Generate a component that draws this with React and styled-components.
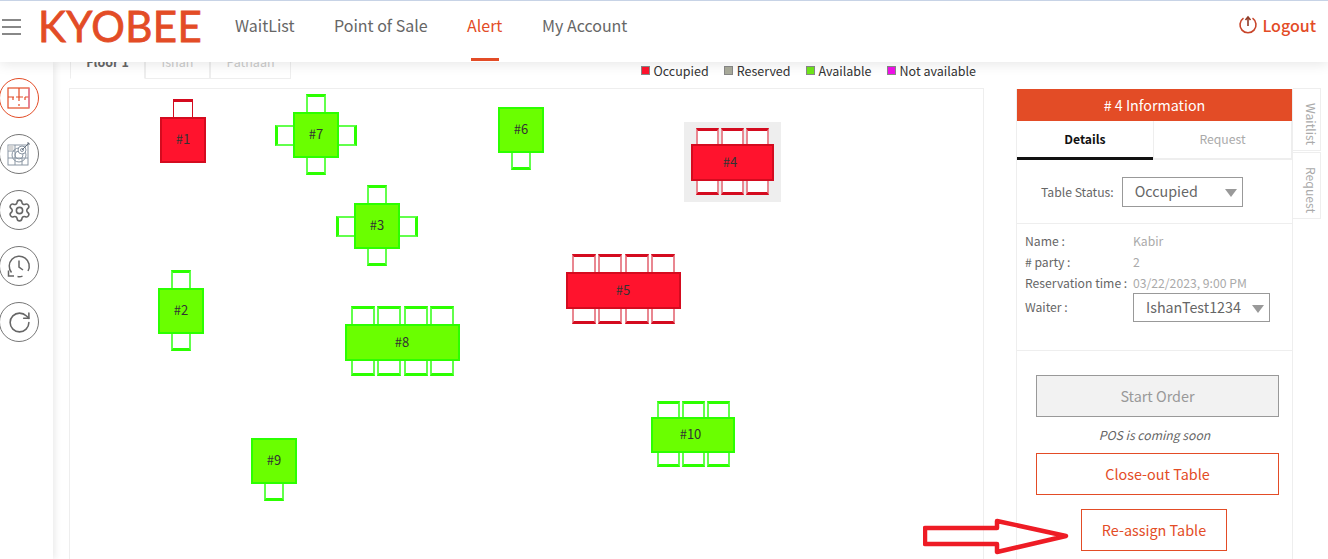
import React from "react";
import styled, { createGlobalStyle } from "styled-components";
import { Settings, RotateCw } from "lucide-react";

const ORANGE = "#e34c26";
const RED = { fill: "#ff132d", edge: "#d40b1f", soft: "#e98791" };
const GREEN = { fill: "#6aff00", edge: "#2cff00", soft: "#62ff4c" };

const tables = [
  { id: 1, x: 90, y: 10, w: 46, h: 46, top: 1, color: RED, sharp: true },
  { id: 7, x: 205, y: 5, w: 46, h: 46, top: 1, bottom: 1, left: 1, right: 1, color: GREEN },
  { id: 3, x: 266, y: 96, w: 46, h: 46, top: 1, bottom: 1, left: 1, right: 1, color: GREEN },
  { id: 6, x: 428, y: 18, w: 46, h: 46, bottom: 1, color: GREEN },
  { id: 2, x: 88, y: 181, w: 46, h: 46, top: 1, bottom: 1, color: GREEN },
  { id: 9, x: 181, y: 349, w: 46, h: 46, bottom: 1, color: GREEN },
  { id: 4, x: 621, y: 39, w: 83, h: 37, top: 3, bottom: 3, color: RED, size: "mid", selected: true },
  { id: 5, x: 496, y: 165, w: 115, h: 37, top: 4, bottom: 4, color: RED, size: "long" },
  { id: 8, x: 275, y: 217, w: 115, h: 37, top: 4, bottom: 4, color: GREEN, size: "long" },
  { id: 10, x: 581, y: 312, w: 84, h: 36, top: 3, bottom: 3, color: GREEN, size: "mid" },
];

const legend = [
  { label: "Occupied", color: "#ff132d" },
  { label: "Reserved", color: "#a9ab9b" },
  { label: "Available", color: "#6fe61a" },
  { label: "Not available", color: "#f010e8" },
];

function FloorIcon() {
  return (
    <svg width="24" height="22" viewBox="0 0 24 22" fill="none" stroke={ORANGE} strokeWidth="1.2">
      <rect x="1" y="1" width="21" height="20" />
      <path d="M12 1v13M12 17v2M1 10h6M9 10h7M18 10h4M6 10v3M18 10v3" />
      <path d="M22 1v20" stroke="#e07aa8" />
    </svg>
  );
}

function TargetIcon() {
  return (
    <svg width="24" height="24" viewBox="0 0 24 24" fill="none" stroke="#8a96a3" strokeWidth="1">
      <rect x="1" y="3" width="20" height="20" />
      <path d="M1 9h7M1 16h20M8 3v20M15 16v7" />
      <rect x="1.5" y="3.5" width="5" height="5" fill="#d5d5d5" stroke="none" />
      <circle cx="12" cy="13" r="7" />
      <circle cx="12" cy="13" r="4" />
      <circle cx="15" cy="8" r="4" fill="#fff" />
      <circle cx="15" cy="8" r="1.5" />
      <path d="M15 8l7-7M20 1h2v2" stroke="#66717d" />
    </svg>
  );
}

function ClockBackIcon() {
  return (
    <svg width="24" height="24" viewBox="0 0 24 24" fill="none" stroke="#666" strokeWidth="1.5">
      <path d="M4.5 18.5A10 10 0 1 1 21 17" />
      <path d="M12 6.5v6.5l4 3" />
      <path d="M1.5 16.5v5.5h5.5" />
      <path d="M10.5 22.5c2 .4 3.5.2 5-.4" />
    </svg>
  );
}

function LogoutIcon() {
  return (
    <svg width="20" height="20" viewBox="0 0 20 20" fill="none" stroke="#c8452a" strokeWidth="1.6">
      <path d="M5.5 3.2a8 8 0 1 0 9 0" />
      <path d="M10 11V2.5" stroke="#8f3a26" />
      <path d="M7.5 5L10 2l2.5 3" stroke="#8f3a26" />
    </svg>
  );
}

function DiningTable({ t }) {
  const seats = (side, n) =>
    Array.from({ length: n || 0 }, (_, i) => (
      <Seat key={i} $side={side} $c={t.color} $sharp={t.sharp} $size={t.size} />
    ));
  return (
    <TableUnit $x={t.x} $y={t.y} $selected={t.selected}>
      <SeatRow $area="top" $size={t.size}>{seats("top", t.top)}</SeatRow>
      <SeatRow $area="left">{seats("left", t.left)}</SeatRow>
      <TableTop $w={t.w} $h={t.h} $c={t.color} $size={t.size}>#{t.id}</TableTop>
      <SeatRow $area="right">{seats("right", t.right)}</SeatRow>
      <SeatRow $area="bottom" $size={t.size}>{seats("bottom", t.bottom)}</SeatRow>
    </TableUnit>
  );
}

export default function App() {
  return (
    <Page>
      <GlobalStyle />
      <Header>
        <Burger>
          <span />
          <span />
          <span />
        </Burger>
        <Logo>KYOBEE</Logo>
        <Nav>
          <NavItem $w={99}>WaitList</NavItem>
          <NavItem $w={133}>Point of Sale</NavItem>
          <NavItem $w={75} $active>Alert</NavItem>
          <NavItem>My Account</NavItem>
        </Nav>
        <Logout>
          <LogoutIcon />
          Logout
        </Logout>
      </Header>

      <Body>
        <Sidebar>
          <RoundIcon $active><FloorIcon /></RoundIcon>
          <RoundIcon><TargetIcon /></RoundIcon>
          <RoundIcon><Settings size={25} strokeWidth={1.5} color="#666" /></RoundIcon>
          <RoundIcon><ClockBackIcon /></RoundIcon>
          <RoundIcon><RotateCw size={25} strokeWidth={1.5} color="#666" /></RoundIcon>
        </Sidebar>

        <Main>
          <FloorBar>
            <FloorTabs>
              <FloorTab $w={75} $active>Floor 1</FloorTab>
              <FloorTab $w={65}>Ishan</FloorTab>
              <FloorTab $w={81}>Pathaan</FloorTab>
            </FloorTabs>
            <Legend>
              {legend.map((item) => (
                <LegendItem key={item.label}>
                  <Swatch $c={item.color} />
                  {item.label}
                </LegendItem>
              ))}
            </Legend>
          </FloorBar>
          <Canvas>
            {tables.map((t) => (
              <DiningTable key={t.id} t={t} />
            ))}
          </Canvas>
        </Main>

        <Panel>
          <PanelTitle># 4 Information</PanelTitle>
          <PanelTabs>
            <PanelTab $active>Details</PanelTab>
            <PanelTab>Request</PanelTab>
          </PanelTabs>
          <StatusRow>
            <StatusLabel>Table Status:</StatusLabel>
            <FakeSelect $w={121} $h={30}>
              Occupied
              <Caret />
            </FakeSelect>
          </StatusRow>
          <InfoBlock>
            <InfoRow $h={21}>
              <InfoLabel>Name :</InfoLabel>
              <InfoValue>Kabir</InfoValue>
            </InfoRow>
            <InfoRow $h={21}>
              <InfoLabel># party :</InfoLabel>
              <InfoValue>2</InfoValue>
            </InfoRow>
            <InfoRow $h={21}>
              <InfoLabel>Reservation time :</InfoLabel>
              <InfoValue>03/22/2023, 9:00 PM</InfoValue>
            </InfoRow>
            <InfoRow $h={29}>
              <InfoLabel $raised>Waiter :</InfoLabel>
              <FakeSelect $w={137} $h={29}>
                IshanTest1234
                <Caret />
              </FakeSelect>
            </InfoRow>
          </InfoBlock>
          <Actions>
            <ActionButton $disabled>Start Order</ActionButton>
            <ComingSoon>POS is coming soon</ComingSoon>
            <ActionButton>Close-out Table</ActionButton>
            <ActionButton $small>Re-assign Table</ActionButton>
          </Actions>
        </Panel>

        <SideTabs>
          <SideTab $h={63}>Waitlist</SideTab>
          <SideTab $h={67}>Request</SideTab>
        </SideTabs>
      </Body>

      <Annotation width="150" height="40" viewBox="0 0 150 40" fill="none">
        <path
          d="M2 10H74V3L143 18L74 34V26H2Z"
          stroke="#ee1c25"
          strokeWidth="4.5"
          strokeLinejoin="round"
        />
      </Annotation>
    </Page>
  );
}

const GlobalStyle = createGlobalStyle`
  html, body {
    margin: 0;
    padding: 0;
    background: #fff;
    overflow: hidden;
  }
  * {
    box-sizing: border-box;
  }
`;

const Page = styled.div`
  position: relative;
  width: 1328px;
  height: 559px;
  overflow: hidden;
  display: flex;
  flex-direction: column;
  font-family: "Noto Sans CJK KR", "Noto Sans", sans-serif;
  color: #555;
`;

const Header = styled.header`
  position: relative;
  z-index: 3;
  flex: 0 0 62px;
  display: flex;
  align-items: center;
  padding: 0 12px 10px 2px;
  background: #fff;
  border-top: 1px solid #c7d3e6;
  box-shadow: 0 2px 12px rgba(0, 0, 0, 0.1);
`;

const Burger = styled.div`
  width: 19px;
  display: flex;
  flex-direction: column;
  gap: 5px;
  span {
    display: block;
    height: 2px;
    background: #888;
  }
`;

const Logo = styled.div`
  margin-left: 17px;
  padding-bottom: 2px;
  width: 197px;
  font-family: "Lato", sans-serif;
  font-size: 42px;
  line-height: 44px;
  letter-spacing: 0.4px;
  color: ${ORANGE};
  -webkit-text-stroke: 0.8px ${ORANGE};
`;

const Nav = styled.nav`
  display: flex;
  align-self: stretch;
  flex: 1;
`;

const NavItem = styled.a`
  position: relative;
  width: ${(p) => (p.$w ? `${p.$w}px` : "auto")};
  padding-top: 12px;
  font-size: 16px;
  line-height: 24px;
  color: ${(p) => (p.$active ? ORANGE : "#666")};
  &::after {
    content: "";
    display: ${(p) => (p.$active ? "block" : "none")};
    position: absolute;
    left: 4px;
    bottom: -9px;
    width: 28px;
    height: 3px;
    background: ${ORANGE};
  }
`;

const Logout = styled.a`
  display: flex;
  align-items: center;
  gap: 4px;
  padding-bottom: 3px;
  font-size: 16px;
  font-weight: 500;
  color: ${ORANGE};
`;

const Body = styled.div`
  flex: 1;
  display: flex;
  min-height: 0;
`;

const Sidebar = styled.aside`
  position: relative;
  z-index: 2;
  flex: 0 0 53px;
  display: flex;
  flex-direction: column;
  gap: 16px;
  padding: 16px 0 0 0;
  background: #fff;
  box-shadow: 3px 0 6px rgba(0, 0, 0, 0.07);
`;

const RoundIcon = styled.div`
  width: 40px;
  height: 40px;
  margin-left: -1px;
  display: flex;
  align-items: center;
  justify-content: center;
  border-radius: 50%;
  border: 1px solid ${(p) => (p.$active ? ORANGE : "#777")};
`;

const Main = styled.main`
  flex: 0 0 915px;
  margin-left: 16px;
  display: flex;
  flex-direction: column;
  min-height: 0;
`;

const FloorBar = styled.div`
  flex: 0 0 26px;
  display: flex;
  justify-content: space-between;
`;

const FloorTabs = styled.div`
  display: flex;
  height: 17px;
  margin-left: 1px;
`;

const FloorTab = styled.div`
  width: ${(p) => p.$w}px;
  height: 17px;
  display: flex;
  align-items: flex-start;
  justify-content: center;
  font-size: 12.5px;
  line-height: 0;
  font-weight: ${(p) => (p.$active ? 700 : 400)};
  color: ${(p) => (p.$active ? "#666" : "#ccc")};
  border: 1px solid #eee;
  border-top: 0;
  border-bottom-color: ${(p) => (p.$active ? "transparent" : "#eee")};
`;

const Legend = styled.div`
  display: flex;
  gap: 15px;
  padding-right: 8px;
  height: 17px;
  align-items: center;
`;

const LegendItem = styled.div`
  display: flex;
  align-items: center;
  gap: 4px;
  font-size: 12.5px;
  color: #333;
`;

const Swatch = styled.i`
  width: 9px;
  height: 9px;
  background: ${(p) => p.$c};
  border: 1px solid #888;
`;

const Canvas = styled.div`
  position: relative;
  isolation: isolate;
  flex: 0 0 520px;
  border: 1px solid #eee;
`;

const TableUnit = styled.div`
  position: absolute;
  left: ${(p) => p.$x}px;
  top: ${(p) => p.$y}px;
  display: grid;
  grid-template-areas:
    ". top ."
    "left body right"
    ". bottom .";
  grid-template-columns: auto auto auto;
  &::before {
    content: "";
    display: ${(p) => (p.$selected ? "block" : "none")};
    position: absolute;
    inset: -6px -7px -7px -7px;
    background: #eee;
    z-index: -1;
  }
`;

const SeatRow = styled.div`
  grid-area: ${(p) => p.$area};
  display: flex;
  justify-content: center;
  align-items: center;
  gap: ${(p) => (p.$size === "long" ? 2.5 : 2)}px;
`;

const seatHeights = {
  mid: { top: 16, bottom: 14 },
  long: { top: 18, bottom: 15 },
};

const seatWidths = { mid: 23, long: 24 };

const labelPadding = { mid: 5, long: 1 };

const sideBorders = (side, size) => {
  const heights = seatHeights[size] || { top: 18, bottom: 17 };
  if (side === "top") return `border-bottom: 0; height: ${heights.top}px;`;
  if (side === "bottom") return `border-top: 0; height: ${heights.bottom}px;`;
  if (side === "left") return "border-right: 0; width: 18px; height: 21px;";
  return "border-left: 0; width: 18px; height: 21px;";
};

const Seat = styled.div`
  width: ${(p) => seatWidths[p.$size] || 20}px;
  background: #fff;
  border: ${(p) => (p.$sharp ? 1 : 2)}px solid ${(p) => (p.$sharp ? p.$c.edge : p.$c.soft)};
  ${(p) => sideBorders(p.$side, p.$size)}
  border-${(p) => p.$side}: 3px solid ${(p) => p.$c.edge};
`;

const TableTop = styled.div`
  grid-area: body;
  width: ${(p) => p.$w}px;
  height: ${(p) => p.$h}px;
  display: flex;
  align-items: center;
  justify-content: center;
  padding: 0 ${(p) => labelPadding[p.$size] || 0}px 3px 0;
  font-size: 13px;
  color: #333;
  background: ${(p) => p.$c.fill};
  border: 2px solid ${(p) => p.$c.edge};
`;

const Panel = styled.section`
  flex: 0 0 277px;
  margin: 27px 0 0 32px;
  display: flex;
  flex-direction: column;
  border-left: 1px solid #eee;
  border-right: 1px solid #eee;
`;

const PanelTitle = styled.div`
  height: 32px;
  background: ${ORANGE};
  color: #fff;
  font-size: 14.3px;
  line-height: 32px;
  text-align: center;
`;

const PanelTabs = styled.div`
  display: flex;
  height: 39px;
`;

const PanelTab = styled.div`
  flex: ${(p) => (p.$active ? "0 0 136px" : "1")};
  display: flex;
  align-items: center;
  justify-content: center;
  padding-bottom: ${(p) => (p.$active ? 0 : 1)}px;
  font-size: 12.2px;
  font-weight: ${(p) => (p.$active ? 700 : 400)};
  color: ${(p) => (p.$active ? "#111" : "#aaa")};
  border-right: ${(p) => (p.$active ? "0" : "1px solid #eee")};
  border-left: ${(p) => (p.$active ? "0" : "1px solid #eee")};
  border-bottom: ${(p) => (p.$active ? "3px solid #111" : "2px solid #eee")};
`;

const StatusRow = styled.div`
  height: 64px;
  display: flex;
  align-items: center;
  gap: 8px;
  padding: 0 0 0 24px;
  border-bottom: 1px solid #eee;
`;

const StatusLabel = styled.span`
  font-size: 12.2px;
  color: #666;
`;

const FakeSelect = styled.div`
  position: relative;
  width: ${(p) => p.$w}px;
  height: ${(p) => p.$h}px;
  display: flex;
  align-items: center;
  padding: 0 0 2px 12px;
  font-size: 14.3px;
  color: #666;
  border: 1px solid #999;
`;

const Caret = styled.i`
  position: absolute;
  right: 5px;
  top: 50%;
  margin-top: -3px;
  border-left: 6px solid transparent;
  border-right: 6px solid transparent;
  border-top: 8px solid #999;
`;

const InfoBlock = styled.div`
  height: 127px;
  padding: 6px 0 0 8px;
  border-bottom: 1px solid #eee;
`;

const InfoRow = styled.div`
  height: ${(p) => p.$h}px;
  display: flex;
  align-items: center;
  font-size: 12.2px;
`;

const InfoLabel = styled.span`
  width: 108px;
  flex: none;
  padding-bottom: ${(p) => (p.$raised ? 2 : 0)}px;
  color: #666;
`;

const InfoValue = styled.span`
  color: #aaa;
`;

const Actions = styled.div`
  display: flex;
  flex-direction: column;
  align-items: flex-end;
  padding: 24px 13px 0 19px;
`;

const ActionButton = styled.div`
  width: ${(p) => (p.$small ? "146px" : "100%")};
  height: 42px;
  margin: ${(p) => (p.$small ? "14px 52px 0 0" : "0")};
  display: flex;
  align-items: center;
  justify-content: center;
  padding-bottom: 1px;
  font-size: 14.4px;
  color: ${(p) => (p.$disabled ? "#999" : ORANGE)};
  background: ${(p) => (p.$disabled ? "#f2f2f2" : "#fff")};
  border: 1px solid ${(p) => (p.$disabled ? "#999" : ORANGE)};
`;

const ComingSoon = styled.p`
  align-self: center;
  height: 36px;
  margin: 0 6px 0 0;
  font-size: 12.2px;
  line-height: 36px;
  font-style: italic;
  color: #666;
`;

const SideTabs = styled.div`
  margin-top: 26px;
  width: 28px;
  display: flex;
  flex-direction: column;
  gap: 1px;
`;

const SideTab = styled.div`
  height: ${(p) => p.$h}px;
  padding-top: 9px;
  display: flex;
  justify-content: center;
  writing-mode: vertical-rl;
  font-size: 12.2px;
  color: #aaa;
  border: 1px solid #eee;
  border-left: 0;
`;

const Annotation = styled.svg`
  position: absolute;
  left: 923px;
  top: 518px;
  z-index: 4;
`;
